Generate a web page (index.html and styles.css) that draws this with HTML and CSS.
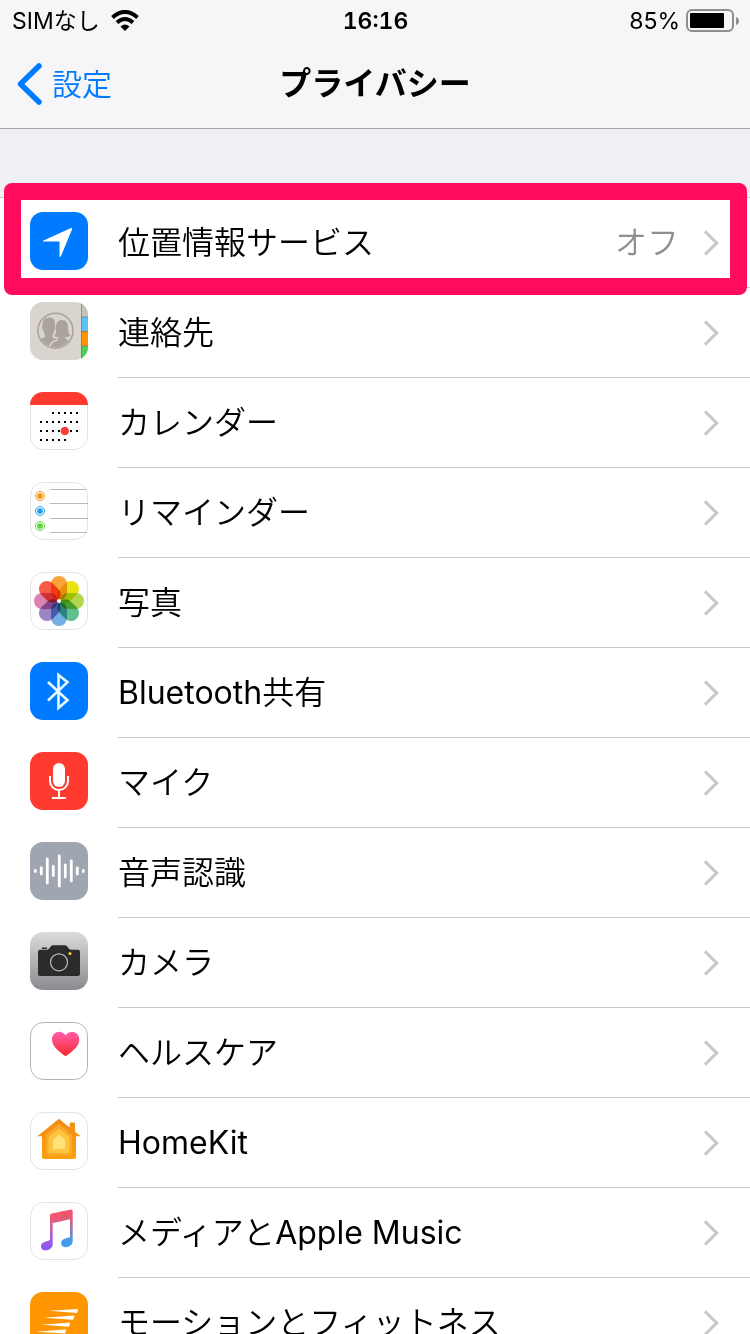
FILE: index.html
```
<!DOCTYPE html>
<html lang="ja">
    <head>
        <meta charset="utf-8">
        <meta name="viewport" content="width=device-width, initial-scale=1.0">
        <title>プライバシー</title>
        <link rel="stylesheet" href="styles.css">
    </head>
    <body>
        <header class="navBar">
            <div class="statusBar">
                <div class="statusLeft">
                    <span>SIMなし</span>
                    <svg width="30" height="22" viewBox="0 0 30 22">
                        <path d="M2.500 7.500Q15 -3.500 27.500 7.500" fill="none" stroke="#000" stroke-width="4"/>
                        <path d="M7 12.500Q15 5.500 23 12.500" fill="none" stroke="#000" stroke-width="4"/>
                        <path d="M10.500 16.500Q15 12.500 19.500 16.500L15 21z"/>
                    </svg>
                </div>
                <div class="statusTime">16:16</div>
                <div class="statusRight">
                    <span>85%</span>
                    <svg width="53" height="24" viewBox="0 0 53 24">
                        <rect x="1" y="1" width="46" height="21" rx="5" fill="none" stroke="#8e8e90" stroke-width="2"/>
                        <rect x="4" y="4" width="34" height="15" rx="1"/>
                        <path d="M50 8q3 1 3 4t-3 4z" fill="#8e8e90"/>
                    </svg>
                </div>
            </div>
            <div class="titleBar">
                <a class="back" href="#settings">
                    <svg width="26" height="42" viewBox="0 0 26 42"><path d="M23 3L4.500 21L23 39" fill="none" stroke="#007aff" stroke-width="5.500" stroke-linecap="round" stroke-linejoin="round"/></svg>
                    <span>設定</span>
                </a>
                <h1>プライバシー</h1>
            </div>
        </header>
        <main>
            <ul class="list">
                <li class="marked">
                    <a class="row" href="#location">
                        <svg class="icon" viewBox="0 0 58 58">
                            <rect width="58" height="58" rx="13" fill="#007aff"/>
                            <path d="M13.500 28.500L41 16q1.500 0 1 1.500L31 44q-1 2-1.500 0V29.500H14q-2 0-.5-1z" fill="#fff"/>
                        </svg>
                        <span class="cell"><span class="label">位置情報サービス</span><span class="value">オフ</span></span>
                    </a>
                </li>
                <li>
                    <a class="row" href="#contacts">
                        <svg class="icon" viewBox="0 0 58 58">
                            <clipPath id="tile"><rect width="58" height="58" rx="13"/></clipPath>
                            <clipPath id="disc"><circle cx="25.500" cy="28.700" r="16.500"/></clipPath>
                            <g clip-path="url(#tile)">
                                <rect width="58" height="58" fill="#d9d4cd"/>
                                <path d="M51 0h7v15h-7z" fill="#c5c1bb"/>
                                <path d="M51 15h7v14h-7z" fill="#5ac3f2"/>
                                <path d="M51 29h7v15h-7z" fill="#ff9500"/>
                                <path d="M51 44h7v14h-7z" fill="#4cd05e"/>
                                <path d="M51.500 0v58M51 15h7M51 29.500h7M51 44h7" stroke="#75716b" stroke-opacity=".6" fill="none"/>
                            </g>
                            <circle cx="25.500" cy="28.700" r="17.500" fill="none" stroke="#a9a39c" stroke-width="1.500"/>
                            <g clip-path="url(#disc)" fill="#aaa49d">
                                <path d="M32 18c4.500 0 6 3.500 6 8 0 4 1 6 2.500 8-2 1-4 1-5.500 1 0 3 5 3 8 6v7H20V40c3-3 9-3 9-5-2 0-4 0-5-1 2-2 2-4 2-8 0-4.500 1.500-8 6-8z"/>
                                <path d="M19 15.500c5 0 6.500 3.500 6 8.500 1 1.500 0 4-1 5-.5 2.500-1.500 3-1.500 5 0 3 4 2.500 5 4-4 1-7.500 3-7.500 10H5v-8c2-3.500 10-3 10-6 0-2-1-2.500-1.500-5-1-1-2-3.500-1-5-.5-5 1.500-8.500 6.500-8.500z"/>
                                <path d="M28 38c-5 1-8.500 3-8.500 9" fill="none" stroke="#d9d4cd" stroke-width="1.500"/>
                            </g>
                        </svg>
                        <span class="cell"><span class="label">連絡先</span></span>
                    </a>
                </li>
                <li>
                    <a class="row" href="#calendar">
                        <svg class="icon" viewBox="0 0 58 58">
                            <rect class="paper" x=".5" y=".5" width="57" height="57" rx="13"/>
                            <path d="M0 13a13 13 0 0 1 13-13h32a13 13 0 0 1 13 13z" fill="#ff3b30"/>
                            <path d="M22 21h27M10 30h39M10 39h39M10 48h27" stroke="#000" stroke-width="2" stroke-dasharray="2 4"/>
                            <circle cx="34.800" cy="39" r="4.200" fill="#fb3d38"/>
                        </svg>
                        <span class="cell"><span class="label">カレンダー</span></span>
                    </a>
                </li>
                <li>
                    <a class="row" href="#reminders">
                        <svg class="icon" viewBox="0 0 58 58">
                            <rect class="paper" x=".5" y=".5" width="57" height="57" rx="13"/>
                            <path d="M20 7.500h37M20 21.500h38M20 36.500h38M20 50.500h37" stroke="#b9b9b9"/>
                            <g fill="#f09a1a" stroke="#f09a1a"><circle cx="10" cy="14" r="4.500" fill="none"/><circle cx="10" cy="14" r="2.500"/></g>
                            <g fill="#279fe8" stroke="#279fe8"><circle cx="10" cy="29" r="4.500" fill="none"/><circle cx="10" cy="29" r="2.500"/></g>
                            <g fill="#5fd33b" stroke="#5fd33b"><circle cx="10" cy="44" r="4.500" fill="none"/><circle cx="10" cy="44" r="2.500"/></g>
                        </svg>
                        <span class="cell"><span class="label">リマインダー</span></span>
                    </a>
                </li>
                <li>
                    <a class="row" href="#photos">
                        <svg class="icon" viewBox="0 0 58 58">
                            <rect class="paper" x=".5" y=".5" width="57" height="57" rx="13"/>
                            <g class="petals">
                                <rect x="21" y="4" width="16" height="24" rx="8" fill="#f9a43a"/>
                                <rect x="21" y="4" width="16" height="24" rx="8" fill="#e9e210" transform="rotate(45 29 29)"/>
                                <rect x="21" y="4" width="16" height="24" rx="8" fill="#b3d64f" transform="rotate(90 29 29)"/>
                                <rect x="21" y="4" width="16" height="24" rx="8" fill="#62be8b" transform="rotate(135 29 29)"/>
                                <rect x="21" y="4" width="16" height="24" rx="8" fill="#72afe3" transform="rotate(180 29 29)"/>
                                <rect x="21" y="4" width="16" height="24" rx="8" fill="#9b85c5" transform="rotate(225 29 29)"/>
                                <rect x="21" y="4" width="16" height="24" rx="8" fill="#d983b2" transform="rotate(270 29 29)"/>
                                <rect x="21" y="4" width="16" height="24" rx="8" fill="#f95a48" transform="rotate(315 29 29)"/>
                            </g>
                            <circle cx="29" cy="29" r="2" fill="#fff"/>
                        </svg>
                        <span class="cell"><span class="label">写真</span></span>
                    </a>
                </li>
                <li>
                    <a class="row" href="#bluetooth">
                        <svg class="icon" viewBox="0 0 58 58">
                            <rect width="58" height="58" rx="13" fill="#007aff"/>
                            <path d="M18 20l19.500 18.200L28.500 46V13l9 7.200L18 38.500" fill="none" stroke="#e9faff" stroke-width="2.600"/>
                        </svg>
                        <span class="cell"><span class="label"><span class="latin">Bluetooth</span>共有</span></span>
                    </a>
                </li>
                <li>
                    <a class="row" href="#microphone">
                        <svg class="icon" viewBox="0 0 58 58">
                            <rect width="58" height="58" rx="13" fill="#ff3b30"/>
                            <rect x="23" y="11" width="12" height="24" rx="6" fill="#fff"/>
                            <path d="M20 24v5a9 9 0 0 0 18 0v-5M29 38v7.500M22 46h14" fill="none" stroke="#fff" stroke-width="2"/>
                        </svg>
                        <span class="cell"><span class="label">マイク</span></span>
                    </a>
                </li>
                <li>
                    <a class="row" href="#speech">
                        <svg class="icon" viewBox="0 0 58 58">
                            <rect width="58" height="58" rx="13" fill="#a0a6b1"/>
                            <path d="M5.300 28.500v1M11.300 26v6M17.300 17v24M23.300 24.500v9M29.300 14v30M35.300 23v12M41.300 19v20M47.300 26v6M53.300 28.500v1" stroke="#fff" stroke-width="2.800" stroke-linecap="round"/>
                        </svg>
                        <span class="cell"><span class="label">音声認識</span></span>
                    </a>
                </li>
                <li>
                    <a class="row" href="#camera">
                        <svg class="icon" viewBox="0 0 58 58">
                            <linearGradient id="steel" x2="0" y2="1"><stop stop-color="#dbdbdd"/><stop offset="1" stop-color="#8b8a8f"/></linearGradient>
                            <rect width="58" height="58" rx="13" fill="url(#steel)"/>
                            <path d="M12 15.500h5v1.500h-5z" fill="#2b2b2b"/>
                            <path d="M10 17.700h7c3 0 3-4.400 6-4.400h12c3 0 3 4.400 6 4.400h7q2 0 2 2V42q0 2-2 2H10q-2 0-2-2V19.700q0-2 2-2z" fill="#2b2b2b"/>
                            <circle cx="29" cy="30.300" r="8.500" fill="none" stroke="#b9b9bc" stroke-width="1.200"/>
                            <circle cx="40" cy="21.500" r="1.500" fill="#ffd21f"/>
                        </svg>
                        <span class="cell"><span class="label">カメラ</span></span>
                    </a>
                </li>
                <li>
                    <a class="row" href="#health">
                        <svg class="icon" viewBox="0 0 58 58">
                            <linearGradient id="heart" x2="0" y2="1"><stop stop-color="#ff5db0"/><stop offset="1" stop-color="#fa2a26"/></linearGradient>
                            <rect class="paper dark" x=".5" y=".5" width="57" height="57" rx="13"/>
                            <path d="M35.600 34.300C30 30 22 25 22 17.500c0-8 9.500-10.500 13.600-4 4.200-6.500 13.700-4 13.700 4 0 7.500-8 12.500-13.700 16.800z" fill="url(#heart)"/>
                        </svg>
                        <span class="cell"><span class="label">ヘルスケア</span></span>
                    </a>
                </li>
                <li>
                    <a class="row" href="#homekit">
                        <svg class="icon" viewBox="0 0 58 58">
                            <linearGradient id="house" x2="0" y2="1"><stop stop-color="#ee8c18"/><stop offset="1" stop-color="#ff9f0a"/></linearGradient>
                            <rect class="paper" x=".5" y=".5" width="57" height="57" rx="13"/>
                            <path d="M29 6.700l10.700 8.800v-4q0-1 1-1H44q1 0 1 1v8.300l5.700 4.500H46V45q0 2-2 2H14q-2 0-2-2V24.300H7.300z" fill="url(#house)"/>
                            <path d="M29 12l13 11v20.500H16V23z" fill="#fba92b"/>
                            <path d="M29 16.500l10.500 8.500v16h-21V25z" fill="#fdc440"/>
                            <path d="M29 22.500l6 5V37H23v-9.500z" fill="#ffe27a"/>
                        </svg>
                        <span class="cell"><span class="label"><span class="latin">HomeKit</span></span></span>
                    </a>
                </li>
                <li>
                    <a class="row" href="#music">
                        <svg class="icon" viewBox="0 0 58 58">
                            <linearGradient id="noteLeft" gradientUnits="userSpaceOnUse" x1="0" y1="8" x2="0" y2="46"><stop offset=".15" stop-color="#f4566b"/><stop offset=".5" stop-color="#c264b0"/><stop offset="1" stop-color="#8a58f5"/></linearGradient>
                            <linearGradient id="noteRight" gradientUnits="userSpaceOnUse" x1="0" y1="8" x2="0" y2="46"><stop offset=".15" stop-color="#f0546f"/><stop offset=".5" stop-color="#9b78b8"/><stop offset=".85" stop-color="#3f9df0"/></linearGradient>
                            <rect class="paper" x=".5" y=".5" width="57" height="57" rx="13"/>
                            <path d="M20 13.500q0-1.500 1.500-2l10-2v9.800L22.700 21v21c0 7-11.700 9-11.700 2.500 0-5 6-5 9-6.500z" fill="url(#noteLeft)"/>
                            <path d="M31 9.600L41.500 7.500q1.200 0 1.200 1.500v30c0 7-11.500 8.500-11.500 2.300 0-5 6-5 8.800-6V17.300l-9 2z" fill="url(#noteRight)"/>
                        </svg>
                        <span class="cell"><span class="label">メディアと<span class="latin">Apple Music</span></span></span>
                    </a>
                </li>
                <li>
                    <a class="row" href="#motion">
                        <svg class="icon" viewBox="0 0 58 58">
                            <rect width="58" height="58" rx="13" fill="#ff9500"/>
                            <path d="M19 18.800L48.200 17l-1.200 4zM13.500 25.800L44.500 23.500l-1.200 4.200zM11.500 32.800L40.300 30.500l-1.200 4.200zM6 39.800L36.300 37.300l-1.200 4.200zM9 46.500l23-2.200-1.200 4.200z" fill="#fff"/>
                        </svg>
                        <span class="cell"><span class="label">モーションとフィットネス</span></span>
                    </a>
                </li>
            </ul>
        </main>
    </body>
</html>
```

FILE: styles.css
```
* {
    box-sizing: border-box;
}
body {
    display: flex;
    flex-direction: column;
    height: 100vh;
    margin: 0;
    background: #efeff4;
    color: #000;
    font-family: Inter, "Noto Sans CJK JP", sans-serif;
    font-size: 32px;
    line-height: 40px;
}
a {
    color: inherit;
    text-decoration: none;
}
svg {
    display: block;
    flex: none;
}

/* header */
.navBar {
    flex: none;
    background: #f6f6f8;
    border-bottom: 1px solid #a7a7ac;
}
.statusBar {
    display: grid;
    grid-template-columns: 1fr auto 1fr;
    align-items: center;
    height: 40px;
    padding: 1px 11px 0 12px;
    font-size: 23px;
}
.statusLeft, .statusRight {
    display: flex;
    align-items: center;
    gap: 10px;
}
.statusRight {
    justify-content: flex-end;
    gap: 6px;
}
.statusTime {
    font-weight: 600;
    font-variant-numeric: tabular-nums;
}
.titleBar {
    display: grid;
    grid-template-columns: 1fr auto 1fr;
    align-items: center;
    height: 88px;
    padding: 0 16px;
}
.back {
    display: flex;
    align-items: center;
    gap: 10px;
    color: #007aff;
    font-size: 30px;
    font-weight: 350;
}
h1 {
    margin: 0;
    font-size: 32px;
    font-weight: 600;
}

/* list */
main {
    flex: 1;
    overflow-y: auto;
    padding-top: 68px;
    scrollbar-width: none;
}
.list {
    margin: 0;
    padding: 0;
    list-style: none;
    background: #fff;
    border-top: 1px solid #c8c7cc;
}
.row {
    display: flex;
    align-items: center;
    gap: 30px;
    height: 90px;
    padding-left: 30px;
}
.icon {
    width: 58px;
    height: 58px;
    margin-bottom: 4px;
}
.paper {
    fill: #fff;
    stroke: #e3e3e6;
}
.dark {
    stroke: #b4b4b6;
}
.petals rect {
    mix-blend-mode: multiply;
}
.cell {
    display: flex;
    flex: 1;
    align-items: center;
    height: 90px;
    padding-right: 35px;
    border-bottom: 1px solid #c8c7cc;
    font-weight: 350;
}
.label {
    flex: 1;
}
.latin {
    font-weight: 400;
}
.value {
    margin-right: 18px;
    color: #8e8e93;
}
.cell::after {
    content: "";
    width: 15px;
    height: 15px;
    border: solid #c7c7cc;
    border-width: 3px 3px 0 0;
    transform: rotate(45deg);
}

/* pink frame round the first row */
.marked {
    position: relative;
}
.marked::after {
    content: "";
    position: absolute;
    top: -15px;
    right: 3px;
    bottom: -7px;
    left: 4px;
    border: 17px solid #ff0d5c;
    border-radius: 8px;
    pointer-events: none;
}
```
